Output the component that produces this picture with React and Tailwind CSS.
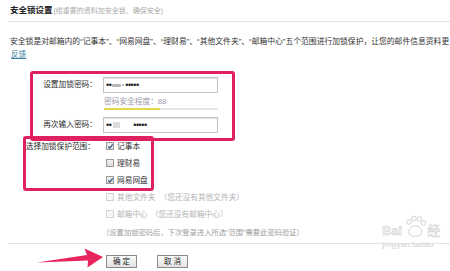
import React from "react";

const font = { fontFamily: '"Liberation Sans", "Noto Sans CJK SC", sans-serif' };

function Box({ checked, disabled }) {
  return (
    <span
      className={`relative inline-block w-[8px] h-[8px] border shrink-0 ${
        disabled ? "border-[#d4d4d4] bg-[#f7f7f7]" : "border-[#9a9a9a] bg-gradient-to-b from-[#f2f2f2] to-[#dcdcdc]"
      }`}
    >
      {checked && (
        <svg viewBox="0 0 8 8" className="absolute left-0 top-0 w-[7px] h-[7px]">
          <path d="M1.5 4 L3.2 5.8 L6.5 1.5" fill="none" stroke="#2f4f7f" strokeWidth="1.3" />
        </svg>
      )}
    </span>
  );
}

function Dots({ n }) {
  return <span className="text-[9px] leading-[10px] tracking-[-0.5px] text-[#222]">{"•".repeat(n)}</span>;
}

export default function App() {
  return (
    <div className="relative w-[450px] h-[271px] overflow-hidden bg-white text-[#333]" style={font}>
      {/* header */}
      <div className="ml-[8px] pl-[2px] pt-[4px] h-[22px] border-b border-[#e4e4e4] flex items-baseline whitespace-nowrap">
        <span className="text-[8.5px] leading-[12px] font-bold text-[#222]">安全锁设置</span>
        <span className="ml-[1px] text-[7px] leading-[12px] text-[#aaa]">(给重要的资料加安全锁，确保安全)</span>
      </div>

      <div className="mt-[14px] ml-[10px] text-[7.8px] leading-[12px] whitespace-nowrap text-[#333]">
        安全锁是对邮箱内的“记事本”、“网易网盘”、“理财易”、“其他文件夹”、“邮箱中心”五个范围进行加锁保护，让您的邮件信息资料更
      </div>
      <div className="mt-[1px] ml-[11px] text-[7.6px] leading-[12px]">
        <span className="text-[#3d7fa0] underline">反馈</span>
      </div>

      {/* form */}
      <div className="mt-[16px] text-[7.7px]">
        <div className="flex items-center h-[16px]">
          <span className="w-[98px] text-right leading-[12px] pr-[1px] text-[#2a2a2a]">设置加锁密码：</span>
          <div className="ml-[5px] w-[115px] h-[16px] border border-[#c4c4c4] shadow-[inset_0_1px_1px_#e0e0e0] flex items-center pl-[2px]">
            <Dots n={2} />
            <span className="inline-block w-[9px] h-[3px] bg-[#9a9a9a] rounded-[1px] mx-[1px] opacity-70" />
            <span className="inline-block w-[2px] h-[2px] bg-[#bbb] mr-[1px]" />
            <Dots n={5} />
          </div>
        </div>
        <div className="mt-[3px] ml-[104px] leading-[12px] text-[#9a9aa8]">密码安全程度：88</div>
        <div className="ml-[104px] w-[114px] h-[2px] bg-[#e6e6e6] flex">
          <div className="w-[56px] h-[2px] bg-[#e2d84a]" />
        </div>
        <div className="mt-[7px] flex items-center h-[16px]">
          <span className="w-[98px] text-right leading-[12px] pr-[1px] text-[#2a2a2a]">再次输入密码：</span>
          <div className="ml-[5px] w-[115px] h-[16px] border border-[#c4c4c4] shadow-[inset_0_1px_1px_#e0e0e0] flex items-center pl-[2px]">
            <Dots n={2} />
            <span className="inline-block w-[7px] h-[6px] bg-[#dcdcdc] ml-[2px]" />
            <span className="w-[13px]" />
            <Dots n={5} />
          </div>
        </div>

        <div className="mt-[5px]">
          <div className="flex items-center h-[17px]">
            <span className="w-[98px] text-right leading-[12px] pr-[3px] text-[#2a2a2a]">选择加锁保护范围：</span>
            <span className="ml-[8px] flex items-center gap-[3px]"><Box checked /><span>记事本</span></span>
          </div>
          <div className="flex items-center h-[17px]">
            <span className="ml-[106px] flex items-center gap-[3px]"><Box /><span>理财易</span></span>
          </div>
          <div className="flex items-center h-[17px]">
            <span className="ml-[106px] flex items-center gap-[3px]"><Box checked /><span>网易网盘</span></span>
          </div>
          <div className="flex items-center h-[17px] text-[#b4b4b4] whitespace-nowrap">
            <span className="ml-[106px] flex items-center gap-[3px]"><Box disabled /><span>其他文件夹</span></span>
            <span className="ml-[4px]">（您还没有其他文件夹）</span>
          </div>
          <div className="flex items-center h-[17px] text-[#b4b4b4] whitespace-nowrap">
            <span className="ml-[106px] flex items-center gap-[3px]"><Box disabled /><span>邮箱中心</span></span>
            <span className="ml-[3px]">（您还没有邮箱中心）</span>
          </div>
        </div>

        <div className="mt-[4px] ml-[102px] leading-[12px] text-[#a0a0a0] whitespace-nowrap text-[7.3px]">
          （设置加锁密码后，下次登录进入所选“范围”需要此密码验证）
        </div>

        <div className="mt-[4px] ml-[8px] border-t border-[#e4e4e4]" />

        <div className="mt-[11px] ml-[106px] flex gap-[20px]">
          <button className="w-[31px] h-[13px] border border-[#8a8a8a] bg-gradient-to-b from-[#fbfbfb] to-[#e2e2e2] text-[7.5px] leading-[11px] text-[#222] tracking-[2px] pl-[2px]">
            确定
          </button>
          <button className="w-[31px] h-[13px] border border-[#8a8a8a] bg-gradient-to-b from-[#fbfbfb] to-[#e2e2e2] text-[7.5px] leading-[11px] text-[#222] tracking-[2px] pl-[2px]">
            取消
          </button>
        </div>
      </div>

      {/* annotation boxes */}
      <div className="absolute left-[30px] top-[71px] w-[205px] h-[70px] border-[3.5px] border-[#e0215f] rounded-[3px]" />
      <div className="absolute left-[23px] top-[136px] w-[131px] h-[55px] border-[3.5px] border-[#e0215f] rounded-[3px]" />

      {/* arrow */}
      <svg className="absolute left-0 top-0" width="450" height="271" viewBox="0 0 450 271">
        <path d="M37 262.5 L87 255 L84.5 248.5 L103 257 L87.5 267.5 L88 260.5 Z" fill="#e8245f" />
      </svg>

      {/* watermark */}
      <div className="absolute left-[382px] top-[214px] text-[#d6d6d6] whitespace-nowrap">
        <div className="flex items-end">
          <span className="text-[13px] leading-[14px] font-bold" style={{ WebkitTextStroke: "0.5px #cfcfcf", color: "#f4f4f4" }}>Bai</span>
          <svg width="24" height="24" viewBox="0 0 24 24" className="ml-[1px]">
            <circle cx="6" cy="8" r="2.3" fill="none" stroke="#d2d2d2" strokeWidth="1" />
            <circle cx="11" cy="4.5" r="2.3" fill="none" stroke="#d2d2d2" strokeWidth="1" />
            <circle cx="16.5" cy="5" r="2.3" fill="none" stroke="#d2d2d2" strokeWidth="1" />
            <circle cx="20.5" cy="9" r="2.3" fill="none" stroke="#d2d2d2" strokeWidth="1" />
            <path d="M6 20 C5 14 10 11 13 12 C17 12 20 16 18 20 C16 23 8 23 6 20 Z" fill="none" stroke="#d2d2d2" strokeWidth="1" />
          </svg>
          <span className="text-[13px] leading-[14px]" style={{ color: "#f4f4f4", WebkitTextStroke: "0.5px #cfcfcf" }}>经</span>
        </div>
        <div className="mt-[2px] text-[8px] leading-[10px] text-[#dcdcdc] font-bold">jingyan.baidu</div>
      </div>
    </div>
  );
}
